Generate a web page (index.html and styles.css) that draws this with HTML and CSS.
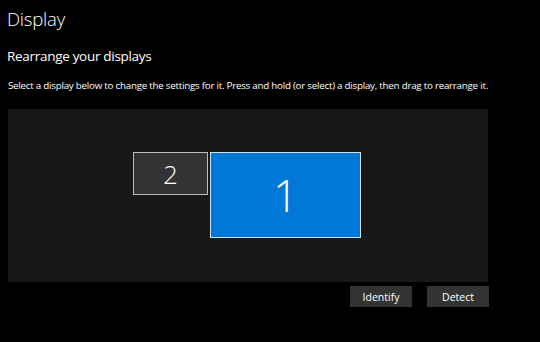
FILE: index.html
```html
<!DOCTYPE html>
<html lang="en">
<head>
    <meta charset="UTF-8">
    <title>Display</title>
    <link rel="stylesheet" href="styles.css">
</head>
<body>
<div class="page">
    <h1 class="title">Display</h1>
    <h2 class="subtitle">Rearrange your displays</h2>
    <p class="hint">Select a display below to change the settings for it. Press and hold (or select) a display, then drag to rearrange it.</p>

    <div class="arrange">
        <div class="monitors">
            <div class="monitor secondary">2</div>
            <div class="monitor primary">1</div>
        </div>
    </div>

    <div class="actions">
        <button class="btn">Identify</button>
        <button class="btn">Detect</button>
    </div>
</div>
</body>
</html>
```

FILE: styles.css
```css
* {
    box-sizing: border-box;
}

body {
    margin: 0;
    background: #000;
    color: #fff;
    font-family: 'Open Sans', 'Noto Sans', sans-serif;
    -webkit-font-smoothing: antialiased;
}

.page {
    width: 540px;
    height: 342px;
    padding: 6px 0 0 7px;
    overflow: hidden;
}

.title {
    margin: 0;
    font-size: 18.5px;
    font-weight: 300;
    line-height: 26px;
    letter-spacing: -0.2px;
}

.subtitle {
    margin: 14px 0 0 0;
    font-size: 13.5px;
    font-weight: 400;
    line-height: 20px;
    letter-spacing: -0.3px;
}

.hint {
    margin: 12px 0 0 1px;
    font-size: 9.8px;
    line-height: 16px;
    letter-spacing: -0.25px;
    white-space: nowrap;
}

.arrange {
    width: 480px;
    height: 173px;
    margin: 15px 0 0 1px;
    background: #181818;
    padding-top: 43px;
}

.monitors {
    display: flex;
    align-items: flex-start;
    gap: 2px;
    margin-left: 125px;
}

.monitor {
    display: flex;
    align-items: center;
    justify-content: center;
    border: 1px solid #bdbdbd;
    color: #fff;
    font-weight: 300;
}

.secondary {
    width: 75px;
    height: 43px;
    background: #333;
    font-size: 26px;
}

.primary {
    width: 151px;
    height: 86px;
    background: #0078d7;
    border-color: #cfe3f5;
    font-size: 44px;
}

.actions {
    display: flex;
    gap: 15px;
    margin: 4px 0 0 343px;
}

.btn {
    width: 62px;
    height: 21px;
    padding: 0;
    border: none;
    background: #333;
    color: #fff;
    font-family: inherit;
    font-size: 10.5px;
}
```
